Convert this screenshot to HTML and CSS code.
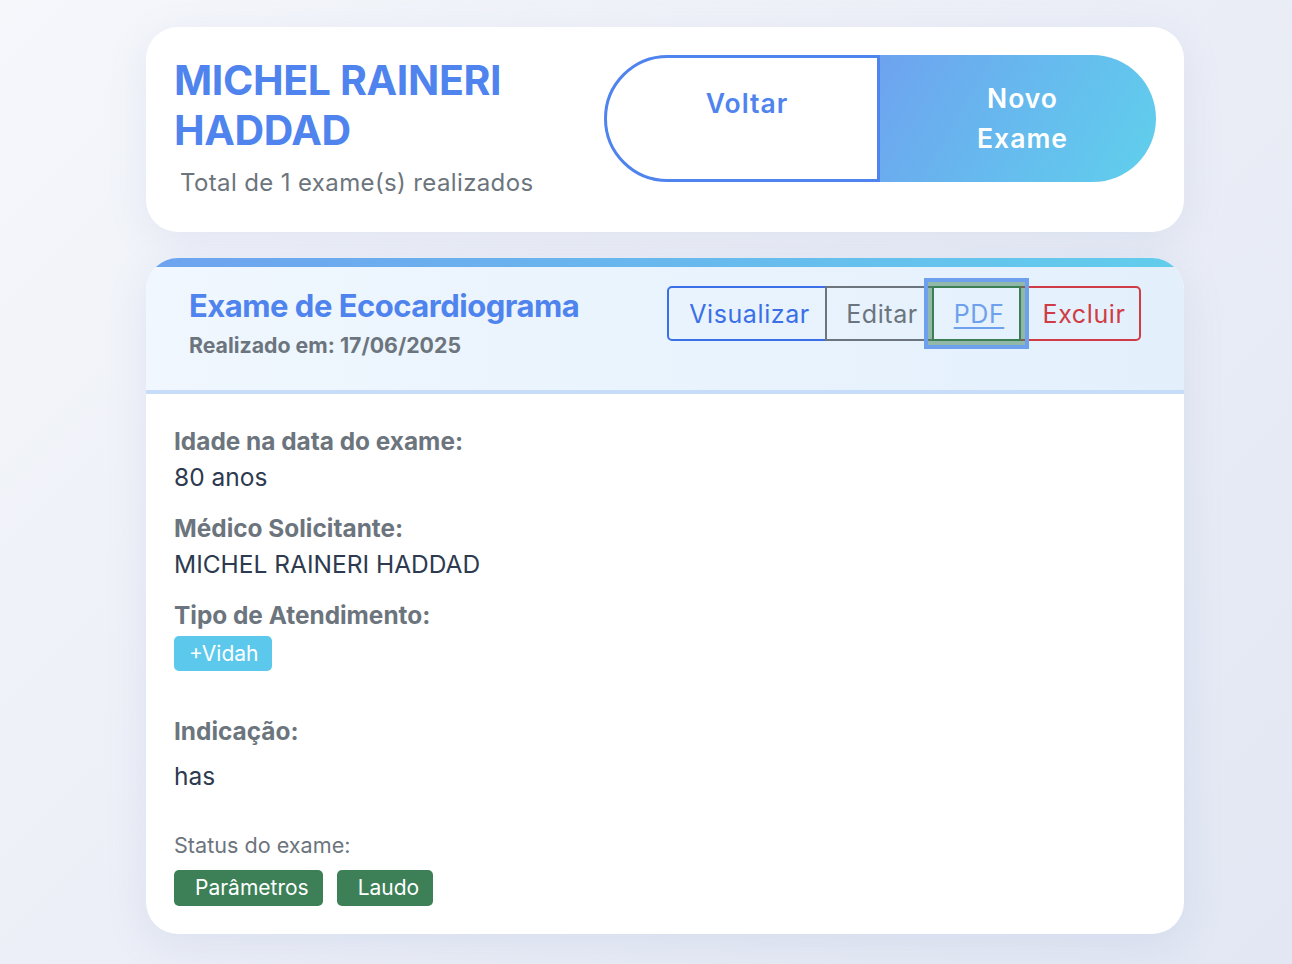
FILE: index.html
```html
<!DOCTYPE html>
<html lang="pt-BR">
<head>
<meta charset="utf-8">
<title>Exames - MICHEL RAINERI HADDAD</title>
<link rel="stylesheet" href="styles.css">
</head>
<body>
<main class="page">
  <section class="patient-card">
    <div class="patient-info">
      <h1 class="patient-name">MICHEL RAINERI<br>HADDAD</h1>
      <p class="patient-total">Total de 1 exame(s) realizados</p>
    </div>
    <div class="patient-actions">
      <a class="btn-back" href="#">Voltar</a>
      <a class="btn-new" href="#">Novo<br>Exame</a>
    </div>
  </section>

  <section class="exam-card">
    <div class="exam-bar"></div>
    <header class="exam-header">
      <div class="exam-heading">
        <h2 class="exam-title">Exame de Ecocardiograma</h2>
        <p class="exam-date">Realizado em: 17/06/2025</p>
      </div>
      <div class="btn-group">
        <a class="gbtn gbtn-view" href="#">Visualizar</a>
        <a class="gbtn gbtn-edit" href="#">Editar</a>
        <a class="gbtn gbtn-pdf" href="#"><span>PDF</span></a>
        <a class="gbtn gbtn-del" href="#">Excluir</a>
      </div>
    </header>
    <div class="exam-body">
      <div class="field">
        <div class="field-label">Idade na data do exame:</div>
        <div class="field-value">80 anos</div>
      </div>
      <div class="field">
        <div class="field-label">Médico Solicitante:</div>
        <div class="field-value">MICHEL RAINERI HADDAD</div>
      </div>
      <div class="field field-type">
        <div class="field-label">Tipo de Atendimento:</div>
        <span class="badge badge-info">+Vidah</span>
      </div>
      <div class="field field-ind">
        <div class="field-label">Indicação:</div>
        <div class="field-value field-value-ind">has</div>
      </div>
      <div class="status">
        <div class="status-label">Status do exame:</div>
        <div class="status-badges">
          <span class="badge badge-ok">Parâmetros</span>
          <span class="badge badge-ok">Laudo</span>
        </div>
      </div>
    </div>
  </section>
</main>
</body>
</html>
```
FILE: styles.css
```css
* { box-sizing: border-box; }
html, body { margin: 0; padding: 0; }
body {
  min-height: 964px;
  font-family: "Inter", "Noto Sans", sans-serif;
  background: linear-gradient(135deg, #f5f7fb 0%, #eceff7 45%, #e2e7f3 100%);
  color: #2d3a4f;
}
.page {
  width: 1038px;
  margin-left: 146px;
  padding-top: 27px;
  padding-bottom: 30px;
}
.patient-card {
  background: #fff;
  border-radius: 32px;
  height: 205px;
  padding: 28px 28px 0 28px;
  display: flex;
  justify-content: space-between;
  align-items: flex-start;
  box-shadow: 0 10px 40px rgba(120, 140, 200, 0.12);
}
.patient-name {
  margin: 0;
  font-size: 41px;
  line-height: 50px;
  font-weight: 700;
  color: #4f83ee;
  letter-spacing: -0.35px;
}
.patient-total {
  margin: 13px 0 0 6px;
  font-size: 24px;
  line-height: 30px;
  color: #6c757d;
  letter-spacing: 0.37px;
}
.patient-actions {
  display: flex;
}
.btn-back, .btn-new {
  display: block;
  width: 276px;
  height: 127px;
  text-decoration: none;
  text-align: center;
  font-size: 26.5px;
  font-weight: 600;
  letter-spacing: 1px;
  line-height: 40px;
}
.btn-back {
  border: 3px solid #4f83ee;
  border-radius: 64px 0 0 64px;
  color: #4f83ee;
  padding-top: 25px;
  padding-left: 10px;
  background: #fff;
}
.btn-new {
  border-radius: 0 64px 64px 0;
  color: #fff;
  padding-top: 23px;
  padding-left: 9px;
  background: linear-gradient(120deg, #6ea3ef 0%, #66baee 50%, #60d0ec 100%);
}
.exam-card {
  margin-top: 26px;
  background: #fff;
  border-radius: 32px;
  overflow: hidden;
  box-shadow: 0 10px 40px rgba(120, 140, 200, 0.14);
}
.exam-bar {
  height: 9px;
  background: linear-gradient(90deg, #6ea3ef 0%, #62cdec 100%);
}
.exam-header {
  height: 127px;
  background: linear-gradient(90deg, #f0f7fe 0%, #e3f0fc 100%);
  border-bottom: 4px solid #c6dcf8;
  padding: 20px 43px 0 43px;
  display: flex;
  justify-content: space-between;
  align-items: flex-start;
}
.exam-title {
  margin: 0;
  font-size: 31px;
  line-height: 38px;
  font-weight: 700;
  color: #4f83ee;
  letter-spacing: -0.5px;
}
.exam-date {
  margin: 6px 0 0 0;
  font-size: 21.3px;
  line-height: 28px;
  font-weight: 700;
  color: #6c757d;
}
.btn-group {
  display: flex;
  margin-top: -1px;
}
.gbtn {
  display: flex;
  align-items: center;
  justify-content: center;
  height: 55px;
  padding-left: 5px;
  font-size: 25px;
  letter-spacing: 0.6px;
  text-decoration: none;
  border: 2px solid;
  background: transparent;
}
.gbtn-view {
  width: 160px;
  margin-left: -1px;
  color: #3b6fe8;
  border-color: #3b6fe8;
  border-radius: 5px 0 0 5px;
}
.gbtn-edit {
  width: 109px;
  margin-left: -2px;
  color: #6c757d;
  border-color: #6c757d;
}
.gbtn-pdf {
  position: relative;
  width: 89px;
  margin-left: -2px;
  color: #6ea0ee;
  border-color: #3c7f55;
  z-index: 1;
}
.gbtn-pdf span {
  text-decoration: underline;
  text-underline-offset: 4px;
  text-decoration-thickness: 2px;
}
.gbtn-pdf::before {
  content: "";
  position: absolute;
  inset: -6px;
  border: 4px solid rgba(60, 127, 85, 0.5);
}
.gbtn-pdf::after {
  content: "";
  position: absolute;
  inset: -10px;
  border: 4px solid #6ea0ee;
}
.gbtn-del {
  width: 122px;
  margin-left: -2px;
  padding-left: 8px;
  color: #cf3c45;
  border-color: #cf3c45;
  border-radius: 0 5px 5px 0;
}
.exam-body {
  padding: 29px 28px 28px 28px;
}
.field { margin-bottom: 15px; }
.field-label {
  font-size: 24.4px;
  line-height: 36px;
  font-weight: 700;
  color: #6c757d;
}
.field-value {
  font-size: 24.5px;
  line-height: 36px;
  color: #2d3a4f;
}
.field-type .badge { margin-top: 3px; }
.field-ind { margin-top: 42px; margin-bottom: 37px; }
.field-value-ind { margin-top: 9px; }
.badge {
  display: inline-block;
  color: #fff;
  font-size: 21px;
  line-height: 35px;
  height: 35px;
  padding: 0 14px 0 15px;
  border-radius: 5px;
}
.badge-info { background: #5bc8ec; }
.badge-ok { background: #3d8057; padding: 0 14px 0 21px; height: 36px; line-height: 36px; }
.status-label {
  font-size: 21.6px;
  line-height: 28px;
  color: #6c757d;
}
.status-badges {
  display: flex;
  gap: 14px;
  margin-top: 11px;
}
```
